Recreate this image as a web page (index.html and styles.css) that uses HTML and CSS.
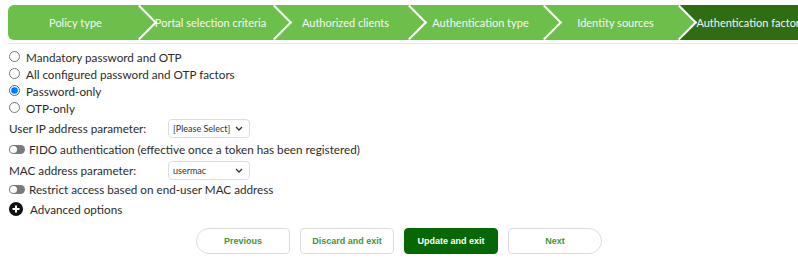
FILE: index.html
```html
<!DOCTYPE html>
<html>
<head>
<meta charset="utf-8">
<link rel="stylesheet" href="styles.css">
</head>
<body>
<div class="wizard">
  <div class="steps">
    <div class="step">Policy type</div>
    <div class="step">Portal selection criteria</div>
    <div class="step">Authorized clients</div>
    <div class="step">Authentication type</div>
    <div class="step">Identity sources</div>
    <div class="step active">Authentication factors</div>
  </div>
</div>
<div class="rule"></div>
<form class="content">
  <div class="radios">
    <label class="radio"><input type="radio" name="f"> Mandatory password and OTP</label>
    <label class="radio"><input type="radio" name="f"> All configured password and OTP factors</label>
    <label class="radio"><input type="radio" name="f" checked> Password-only</label>
    <label class="radio"><input type="radio" name="f"> OTP-only</label>
  </div>
  <div class="field">
    <span class="label">User IP address parameter:</span>
    <select class="select"><option>[Please Select]</option></select>
  </div>
  <div class="switch-row"><span class="toggle"></span>FIDO authentication (effective once a token has been registered)</div>
  <div class="field field-short">
    <span class="label">MAC address parameter:</span>
    <select class="select"><option>usermac</option></select>
  </div>
  <div class="switch-row switch-short"><span class="toggle"></span>Restrict access based on end-user MAC address</div>
  <div class="advanced">
    <svg class="plus" width="14" height="14" viewBox="0 0 14 14"><circle cx="7" cy="7" r="7" fill="#111"/><path d="M7 3.5v7M3.5 7h7" stroke="#fff" stroke-width="2"/></svg>
    Advanced options
  </div>
  <div class="buttons">
    <button type="button" class="btn prev">Previous</button>
    <button type="button" class="btn">Discard and exit</button>
    <button type="button" class="btn primary">Update and exit</button>
    <button type="button" class="btn next">Next</button>
  </div>
</form>
</body>
</html>
```
FILE: styles.css
```css
html, body {
  margin: 0;
  overflow: hidden;
  background: #fff;
}
body {
  font-family: Lato, "Open Sans", sans-serif;
  color: #2b2b2b;
}
.wizard {
  padding: 5px 0 0 8px;
  overflow: hidden;
}
.steps {
  display: flex;
  height: 35px;
  width: 820px;
  background: #6dbf4b;
  border-radius: 6px 0 0 6px;
  position: relative;
  z-index: 0;
}
.step {
  flex: 0 0 135px;
  position: relative;
  display: flex;
  align-items: center;
  justify-content: center;
  color: #f6f6f6;
  font-size: 11px;
  white-space: nowrap;
}
.step + .step::before {
  content: "";
  position: absolute;
  left: -16.5px;
  top: 5px;
  width: 25px;
  height: 25px;
  box-sizing: border-box;
  border-top: 2px solid #fff;
  border-right: 2px solid #fff;
  transform: rotate(45deg);
  z-index: 1;
}
.step.active::after {
  content: "";
  position: absolute;
  left: -4px;
  top: 0;
  bottom: 0;
  right: 0;
  background: #2f6c12;
  clip-path: polygon(0 0, 100% 0, 100% 100%, 0 100%, 17px 50%);
  z-index: -1;
}
.rule {
  height: 1px;
  background: #e8e8e8;
  margin: 3px 0 0 8px;
}
.content {
  padding: 4px 8px 0 8px;
  font-size: 11.7px;
}
.radios {
  display: flex;
  flex-direction: column;
}
.radio {
  display: flex;
  align-items: center;
  height: 17px;
}
.radio input {
  width: 11px;
  height: 11px;
  margin: 0 6px 0 1px;
}
.field {
  display: flex;
  align-items: center;
  height: 22px;
  margin-top: 1px;
}
.field-short {
  height: 20px;
}
.label {
  width: 159px;
  padding-left: 1px;
}
.select {
  appearance: none;
  -webkit-appearance: none;
  width: 82px;
  height: 19px;
  border: 1px solid #ddd;
  border-radius: 4px;
  background: #fff url("data:image/svg+xml;utf8,<svg xmlns='http://www.w3.org/2000/svg' width='8' height='5' viewBox='0 0 8 5'><path d='M1 1l3 3 3-3' fill='none' stroke='%23333' stroke-width='1.3'/></svg>") no-repeat right 6px center;
  font-family: Lato, sans-serif;
  font-size: 9px;
  color: #333;
  padding: 0 4px;
  margin: 0;
}
.switch-row {
  display: flex;
  align-items: center;
  height: 20px;
}
.switch-short {
  height: 18px;
}
.toggle {
  width: 16px;
  height: 9px;
  border-radius: 5px;
  background: #7a7a7a;
  position: relative;
  margin: 0 4px 0 1px;
}
.toggle::after {
  content: "";
  position: absolute;
  left: 1px;
  top: 1px;
  width: 7px;
  height: 7px;
  border-radius: 50%;
  background: #fff;
}
.advanced {
  display: flex;
  align-items: center;
  height: 20px;
  margin-top: 1px;
}
.plus {
  margin: 0 7px 0 1px;
}
.buttons {
  display: flex;
  justify-content: center;
  gap: 10px;
  margin-top: 9px;
}
.btn {
  width: 94px;
  height: 26px;
  border: 1px solid #dcdcdc;
  background: #fff;
  color: #3a9a32;
  font-family: "Liberation Sans", Arial, sans-serif;
  font-weight: bold;
  font-size: 9px;
  border-radius: 4px;
  padding: 0;
}
.btn.prev {
  border-radius: 13px 4px 4px 13px;
}
.btn.next {
  border-radius: 4px 13px 13px 4px;
}
.btn.primary {
  background: #056805;
  border-color: #056805;
  color: #fff;
}
```
